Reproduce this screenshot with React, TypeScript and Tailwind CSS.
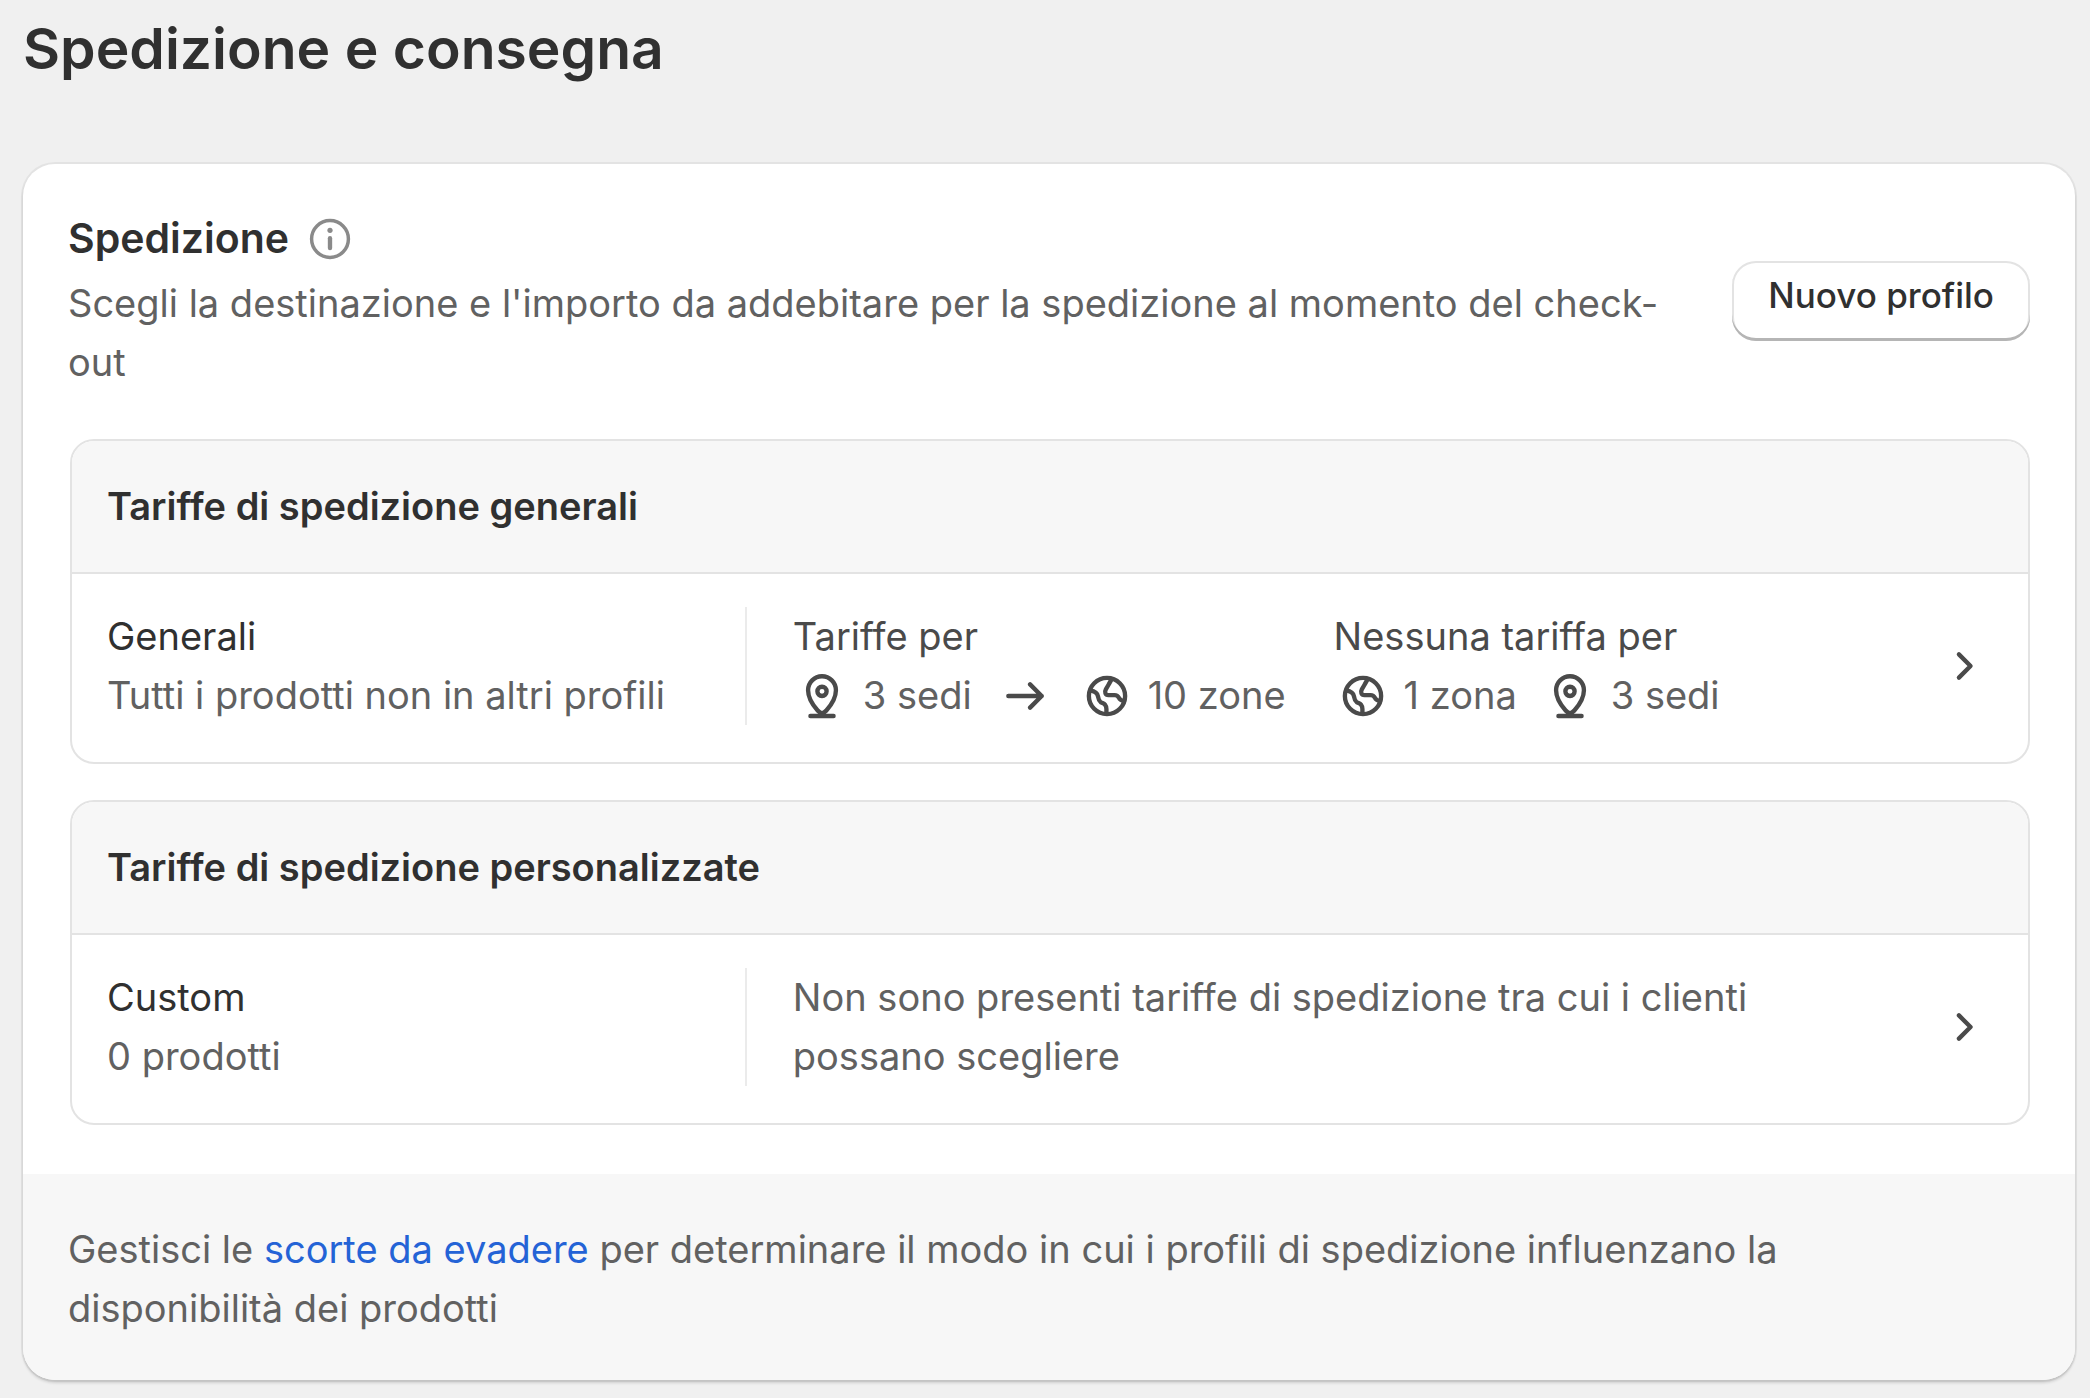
import React from "react";

function Icon({
	children,
	className = "text-[#4a4a4a]",
}: {
	children: React.ReactNode;
	className?: string;
}) {
	return (
		<svg
			viewBox="0 0 20 20"
			fill="none"
			stroke="currentColor"
			strokeWidth="1.5"
			strokeLinecap="round"
			strokeLinejoin="round"
			aria-hidden="true"
			className={`h-[58px] w-[58px] shrink-0 ${className}`}
		>
			{children}
		</svg>
	);
}

function PinIcon() {
	return (
		<Icon>
			<path d="M10 15.9c-.5 0-1-.3-1.5-.9C6.9 13.2 5.2 10.9 5.2 8a4.8 4.8 0 0 1 9.6 0c0 2.9-1.7 5.2-3.3 7-.5.6-1 .9-1.5.9Z" />
			<circle cx="10" cy="8.4" r="1.6" />
			<path d="M6 16.9h8" />
		</Icon>
	);
}

function GlobeIcon() {
	return (
		<Icon>
			<circle cx="10" cy="10" r="6.25" />
			<path d="M11.6 4.2 10.6 6c-.3.6-.6 1-1 1.700-.5.900-.2 2 .9 2h2.100c.8 0 1.200.3 1.500.9.3.7.900 1 1.800 1.200" />
			<path d="M4.200 8.100c1.500.300 2.500.9 2.700 2 .2 1.200.2 1.500.9 2 .6.400 1.100.400 1.500.9.400.500.500 1 .5 1.500v1.500" />
		</Icon>
	);
}

function ArrowIcon() {
	return (
		<Icon>
			<path d="M4.25 10h11.5M11.75 6l4 4-4 4" />
		</Icon>
	);
}

function Stat({ icon, label }: { icon: React.ReactNode; label: string }) {
	return (
		<span className="flex items-center gap-3 whitespace-nowrap">
			{icon}
			{label}
		</span>
	);
}

function ProfileCard({
	title,
	name,
	detail,
	children,
}: {
	title: string;
	name: string;
	detail: string;
	children: React.ReactNode;
}) {
	return (
		<section className="overflow-hidden rounded-3xl border-2 border-[#e3e3e3] bg-white">
			<h3 className="border-b-2 border-[#e3e3e3] bg-[#f7f7f7] px-[35px] py-9 font-semibold text-[#303030]">
				{title}
			</h3>
			<div className="flex items-center px-[35px] pt-[33px] pb-[37px]">
				<div className="flex min-w-0 flex-1">
					<div className="w-[35%] shrink-0 border-r-2 border-[#ebebeb]">
						<h4 className="text-[#303030]">{name}</h4>
						<p>{detail}</p>
					</div>
					<div className="min-w-0 flex-1 pr-9 pl-[46px]">{children}</div>
				</div>
				<button type="button" aria-label={`Apri ${name}`}>
					<Icon>
						<path d="m8.25 6 4 4-4 4" />
					</Icon>
				</button>
			</div>
		</section>
	);
}

export default function App() {
	return (
		<main className="min-h-screen bg-[#f0f0f0] pt-4 pr-[15px] pb-4 pl-[23px] font-['Inter',sans-serif] text-[38px] leading-[59px] text-[#616161]">
			<h1 className="text-[57px] leading-[66px] font-semibold text-[#303030]">
				Spedizione e consegna
			</h1>

			<div className="mt-[82px] overflow-hidden rounded-[32px] bg-white shadow-[0_3px_3px_rgba(0,0,0,0.14),0_0_0_2px_rgba(0,0,0,0.05)]">
				<div className="px-[45px] pt-[45px] pb-[49px]">
					<div className="flex items-center justify-between gap-9">
						<div className="min-w-0">
							<div className="flex items-center gap-3">
								<h2 className="text-[41px] font-semibold text-[#303030]">
									Spedizione
								</h2>
								<button type="button" aria-label="Informazioni">
									<Icon className="text-[#8a8a8a]">
										<circle cx="10" cy="10" r="6.35" strokeWidth="1.2" />
										<path d="M10 9.7v3.4" />
										<circle cx="10" cy="7" r=".9" fill="currentColor" stroke="none" />
									</Icon>
								</button>
							</div>
							<p className="mt-1.5">
								Scegli la destinazione e l'importo da addebitare per la
								spedizione al momento del check-out
							</p>
						</div>
						<button
							type="button"
							className="shrink-0 rounded-3xl bg-white px-9 pt-[9px] pb-[21px] text-[35px] leading-[50px] font-medium whitespace-nowrap text-[#303030] shadow-[inset_0_-3px_0_#b5b5b5,inset_0_0_0_2px_#e3e3e3]"
						>
							Nuovo profilo
						</button>
					</div>

					<div className="mt-[47px] flex flex-col gap-9 pl-0.5">
						<ProfileCard
							title="Tariffe di spedizione generali"
							name="Generali"
							detail="Tutti i prodotti non in altri profili"
						>
							<div className="flex flex-wrap gap-x-12">
								<div>
									<h5 className="text-[#4a4a4a]">Tariffe per</h5>
									<div className="flex items-center gap-6">
										<Stat icon={<PinIcon />} label="3 sedi" />
										<ArrowIcon />
										<Stat icon={<GlobeIcon />} label="10 zone" />
									</div>
								</div>
								<div>
									<h5 className="text-[#4a4a4a]">Nessuna tariffa per</h5>
									<div className="flex items-center gap-6">
										<Stat icon={<GlobeIcon />} label="1 zona" />
										<Stat icon={<PinIcon />} label="3 sedi" />
									</div>
								</div>
							</div>
						</ProfileCard>

						<ProfileCard
							title="Tariffe di spedizione personalizzate"
							name="Custom"
							detail="0 prodotti"
						>
							<p>
								Non sono presenti tariffe di spedizione tra cui i clienti
								possano scegliere
							</p>
						</ProfileCard>
					</div>
				</div>

				<footer className="bg-[#f7f7f7] pt-[46px] pr-24 pb-[42px] pl-[45px]">
					<p>
						Gestisci le{" "}
						<a href="#scorte" className="text-[#2463d6]">
							scorte da evadere
						</a>{" "}
						per determinare il modo in cui i profili di spedizione influenzano
						la disponibilità dei prodotti
					</p>
				</footer>
			</div>
		</main>
	);
}
